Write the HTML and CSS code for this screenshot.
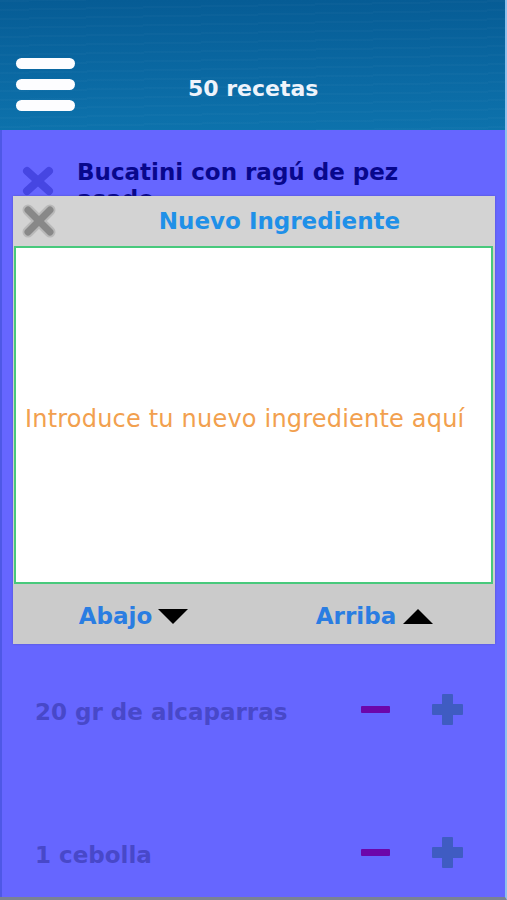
FILE: index.html
```html
<!DOCTYPE html>
<html lang="es">
<head>
  <meta charset="utf-8">
  <title>50 recetas</title>
  <link rel="stylesheet" href="styles.css">
</head>
<body>
  <div class="screen">
    <header class="topbar">
      <button class="menu" aria-label="Menu">
        <span></span><span></span><span></span>
      </button>
      <h1>50 recetas</h1>
    </header>

    <main class="content">
      <div class="recipe">
        <svg class="recipe-x" width="32" height="30" viewBox="0 0 32 30">
          <line x1="5" y1="5" x2="27" y2="25" />
          <line x1="27" y1="5" x2="5" y2="25" />
        </svg>
        <h2>Bucatini con ragú de pez asado</h2>
      </div>

      <ul class="ingredients">
        <li>
          <span class="name">20 gr de alcaparras</span>
          <svg class="minus" width="30" height="31" viewBox="0 0 30 31"><rect x="0" y="12" width="29" height="7" rx="1" /></svg>
          <svg class="plus" width="31" height="31" viewBox="0 0 31 31"><rect x="10" y="0" width="11" height="31" rx="1" /><rect x="0" y="10" width="31" height="11" rx="1" /></svg>
        </li>
        <li>
          <span class="name">1 cebolla</span>
          <svg class="minus" width="30" height="31" viewBox="0 0 30 31"><rect x="0" y="12" width="29" height="7" rx="1" /></svg>
          <svg class="plus" width="31" height="31" viewBox="0 0 31 31"><rect x="10" y="0" width="11" height="31" rx="1" /><rect x="0" y="10" width="31" height="11" rx="1" /></svg>
        </li>
      </ul>

      <!-- dialogo para nuevo ingrediente -->
      <div class="dialog">
        <div class="dialog-head">
          <svg class="close" width="34" height="34" viewBox="0 0 34 34">
            <g class="edge">
              <line x1="6" y1="6" x2="28" y2="28" />
              <line x1="28" y1="6" x2="6" y2="28" />
            </g>
            <g class="core">
              <line x1="6" y1="6" x2="28" y2="28" />
              <line x1="28" y1="6" x2="6" y2="28" />
            </g>
          </svg>
          <h3>Nuevo Ingrediente</h3>
        </div>
        <div class="entry">
          <span class="placeholder">Introduce tu nuevo ingrediente aquí</span>
        </div>
        <div class="dialog-foot">
          <button class="move">Abajo<span class="tri down"></span></button>
          <button class="move">Arriba<span class="tri up"></span></button>
        </div>
      </div>
    </main>
  </div>
</body>
</html>
```

FILE: styles.css
```css
body {
  margin: 0;
  font-family: "DejaVu Sans", "Liberation Sans", sans-serif;
  background: #5a6478;
}

.screen {
  width: 507px;
  height: 900px;
  box-sizing: border-box;
  display: flex;
  flex-direction: column;
  border-right: 2px solid #8dc2ee;
  border-bottom: 3px solid #7a8294;
  overflow: hidden;
}

.topbar {
  flex: none;
  height: 130px;
  box-sizing: border-box;
  display: flex;
  align-items: flex-start;
  padding: 58px 0 0 16px;
  background:
    repeating-linear-gradient(179deg, rgba(255, 255, 255, 0.018) 0 2px, transparent 2px 9px),
    linear-gradient(#065c95, #0a68a2 55%, #0d72ac);
}

.menu {
  display: flex;
  flex-direction: column;
  gap: 10px;
  width: 59px;
  padding: 0;
  border: 0;
  background: none;
}

.menu span {
  display: block;
  height: 11px;
  border-radius: 6px;
  background: #fdfdff;
}

.topbar h1 {
  margin: 18px 0 0 113px;
  font-size: 22px;
  line-height: 26px;
  font-weight: bold;
  color: #eef3fb;
}

.content {
  flex: 1;
  position: relative;
  background: #6666ff;
  border-left: 2px solid #4e58e6;
}

.recipe {
  display: flex;
  align-items: flex-start;
  gap: 23px;
  padding: 29px 45px 0 20px;
}

.recipe-x {
  flex: none;
  margin-top: 7px;
}

.recipe-x line {
  stroke: #4646e2;
  stroke-width: 8;
  stroke-linecap: round;
}

.recipe h2 {
  margin: 0;
  font-size: 23px;
  line-height: 27px;
  font-weight: bold;
  color: #08088c;
}

.ingredients {
  list-style: none;
  margin: 479px 0 0;
  padding: 0;
}

.ingredients li {
  display: flex;
  align-items: center;
  height: 40px;
  margin-bottom: 103px;
  padding: 0 42px 0 33px;
}

.ingredients .name {
  flex: 1;
  font-size: 23px;
  line-height: 40px;
  font-weight: bold;
  color: #4848c9;
}

.ingredients svg {
  margin-top: -6px;
}

.minus {
  margin-right: 41px;
}

.minus rect {
  fill: #6c06aa;
}

.plus rect {
  fill: #3f5cc2;
}

.dialog {
  position: absolute;
  left: 11px;
  top: 66px;
  width: 482px;
  background: #cfcfcf;
  box-shadow: 0 0 2px rgba(60, 60, 120, 0.4);
}

.dialog-head {
  display: flex;
  align-items: center;
  height: 50px;
  padding-left: 9px;
  background: #d3d3d3;
}

.close {
  flex: none;
}

.close .edge line {
  stroke: #b9b9b9;
  stroke-width: 11;
  stroke-linecap: round;
}

.close .core line {
  stroke: #888888;
  stroke-width: 7;
  stroke-linecap: round;
}

.dialog-head h3 {
  flex: 1;
  margin: 0;
  padding-left: 8px;
  text-align: center;
  font-size: 23px;
  font-weight: bold;
  color: #1f90e8;
}

.entry {
  display: flex;
  align-items: center;
  height: 326px;
  margin: 0 2px 0 1px;
  padding: 8px 0 0 9px;
  background: #ffffff;
  border: 2px solid #48c97c;
}

.placeholder {
  font-size: 24px;
  letter-spacing: 0.2px;
  color: #f2a04e;
}

.dialog-foot {
  display: flex;
  height: 60px;
  background: #cbcbcb;
}

.move {
  flex: 1;
  display: flex;
  align-items: center;
  justify-content: center;
  gap: 6px;
  padding: 4px 0 0;
  border: 0;
  background: none;
  font-family: inherit;
  font-size: 23px;
  font-weight: bold;
  color: #2a7de2;
}

.tri {
  width: 0;
  height: 0;
  border-left: 15px solid transparent;
  border-right: 15px solid transparent;
}

.tri.down {
  border-top: 15px solid #000000;
}

.tri.up {
  margin-left: 1px;
  border-bottom: 15px solid #000000;
}
```
